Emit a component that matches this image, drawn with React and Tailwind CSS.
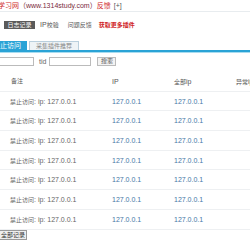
export default function App() {
  const rows = Array.from({ length: 7 });
  const font = { fontFamily: '"Liberation Sans", "Noto Sans CJK SC", sans-serif' };
  return (
    <div className="w-[250px] h-[250px] overflow-hidden bg-white text-[7px] leading-none" style={font}>
      <div className="h-[12px] flex items-center border-b border-[#e8ecef] whitespace-nowrap -ml-[2px]">
        <span className="text-[#d01f2a]">学习网</span>
        <span className="text-[#7a2a3c]">（www.1314study.com）</span>
        <span className="text-[#d01f2a]">反馈</span>
        <span className="text-[#555] ml-[3px]">[+]</span>
      </div>
      <div className="h-[25px] flex items-center pl-[4px] whitespace-nowrap text-[6px]">
        <span className="bg-[#5a5a5a] text-white w-[31px] h-[8px] flex items-center justify-center">日志记录</span>
        <span className="text-[#555] ml-[5px]"><span className="text-[7px]">IP</span>校验</span>
        <span className="text-[#555] ml-[9px]">问题反馈</span>
        <span className="text-[#d01f2a] font-bold ml-[7px]">获取更多插件</span>
      </div>
      <div className="flex items-end h-[13px] gap-[2px] whitespace-nowrap text-[6px]">
        <div className="w-[27px] h-[9px] bg-[#2aa3d6] text-white text-[7px] flex items-center justify-end pr-[6px] overflow-hidden">
          禁止访问
        </div>
        <div className="w-[50px] h-[9px] bg-[#eef3f6] border border-b-0 border-[#b9cfdd] text-[#888] flex items-center justify-center">
          采集插件推荐
        </div>
      </div>
      <div className="h-[2px] bg-[#2aa3d6]"></div>
      <div className="h-[1px] bg-[#a8dcf0]"></div>
      <div className="flex items-center h-[14px] mt-[1px] whitespace-nowrap">
        <div className="w-[35px] h-[9px] border border-[#bbb] -ml-[1px]"></div>
        <span className="text-[#666] ml-[5px]">tid</span>
        <div className="w-[42px] h-[9px] border border-[#bbb] ml-[3px]"></div>
        <div className="w-[19px] h-[9px] border border-[#bbb] bg-[#f3f3f3] ml-[6px] text-[#555] text-[6px] flex items-center justify-center">搜索</div>
      </div>
      <div className="mt-[4px]">
        <div className="grid grid-cols-[112px_62px_62px_14px] h-[19.7px] items-center border-b border-[#eef0f2] whitespace-nowrap text-[#555] text-[6px]">
          <span className="pl-[11px]">备注</span>
          <span className="text-[7px]">IP</span>
          <span>全部<span className="text-[7px]">ip</span></span>
          <span>异常<span className="text-[7px]">ip</span></span>
        </div>
        {rows.map((_, i) => (
          <div key={i} className="grid grid-cols-[112px_62px_62px_14px] h-[19.7px] items-center border-b border-[#eef0f2] whitespace-nowrap">
            <span className="pl-[10px] text-[#666]">
              <span className="text-[6px]">禁止访问</span>: ip: 127.0.0.1
            </span>
            <span className="text-[#4677a6]">127.0.0.1</span>
            <span className="text-[#4677a6]">127.0.0.1</span>
            <span></span>
          </div>
        ))}
        <div className="w-[28px] h-[10px] border border-[#999] bg-[#eee] -ml-[1px] flex items-center justify-end text-[#333] text-[6px] overflow-hidden whitespace-nowrap pr-[1px]">
          全部记录
        </div>
      </div>
    </div>
  );
}
